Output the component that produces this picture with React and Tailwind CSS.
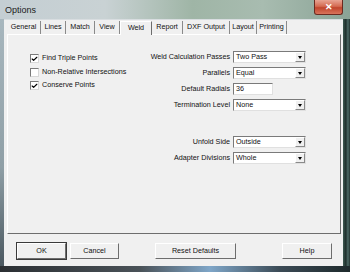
import { Check } from "lucide-react";

const font = { fontFamily: '"Liberation Sans", Arial, sans-serif' };

const CheckRow = ({ label, checked }) => (
  <div className="flex items-center h-[13.5px] gap-[3px]">
    <div className="w-[9px] h-[9px] shrink-0 bg-white border border-t-[#7a7a7a] border-l-[#7a7a7a] border-b-[#d8d8d8] border-r-[#d8d8d8] flex items-center justify-center">
      {checked && <Check size={8} strokeWidth={4} className="text-black" />}
    </div>
    <span className="text-[7.2px] text-[#111] whitespace-nowrap">{label}</span>
  </div>
);

const Field = ({ label, value, combo = true, width = "w-[73px]", className = "" }) => (
  <div className={`flex items-center h-[12px] ${className}`}>
    <span className="w-[100px] text-right pr-[3px] text-[7.2px] text-[#111] whitespace-nowrap">{label}</span>
    <div className={`${width} h-[12px] bg-white border border-t-[#7a7a7a] border-l-[#7a7a7a] border-b-[#e0e0e0] border-r-[#e0e0e0] flex items-center`}>
      <span className="flex-1 pl-[2px] text-[7.2px] text-[#111] leading-none">{value}</span>
      {combo && (
        <div className="w-[10px] h-[10px] bg-[#f0f0f0] border border-t-white border-l-white border-b-[#8a8a8a] border-r-[#8a8a8a] flex items-center justify-center">
          <div className="w-0 h-0 border-l-[2.5px] border-r-[2.5px] border-t-[3px] border-l-transparent border-r-transparent border-t-black" />
        </div>
      )}
    </div>
  </div>
);

const Button = ({ label, width, def = false }) => (
  <div className={`${width} h-[16px] flex items-center justify-center bg-[#f0f0f0] border border-t-white border-l-white border-b-[#6d6d6d] border-r-[#6d6d6d] ${def ? "outline outline-1 outline-[#3a3a3a]" : ""}`}>
    <span className="text-[7.2px] text-[#111]">{label}</span>
  </div>
);

const tabs = [
  { t: "General", w: "w-[34px]" },
  { t: "Lines", w: "w-[25px]" },
  { t: "Match", w: "w-[29px]" },
  { t: "View", w: "w-[25px]" },
  { t: "Weld", w: "w-[32px]", active: true },
  { t: "Report", w: "w-[31px]" },
  { t: "DXF Output", w: "w-[47px]" },
  { t: "Layout", w: "w-[27px]" },
  { t: "Printing", w: "w-[30px]" },
];

export default function App() {
  return (
    <div className="w-[350px] h-[272px] overflow-hidden relative bg-[linear-gradient(90deg,#aebcc2_0%,#b9c6c9_35%,#8ea596_60%,#6b8a78_85%,#2f4a40_100%)]" style={font}>
      {/* title bar */}
      <div className="h-[19px] flex items-start justify-between bg-[linear-gradient(90deg,#c4ced3_0%,#c9d2d4_30%,#9fb5a6_55%,#a8bcb0_75%,#8aa396_100%)]">
        <span className="ml-[5px] mt-[4px] text-[9px] text-[#1b1b1b]">Options</span>
        <div className="mr-[7px] w-[29px] h-[15px] rounded-b-[3px] border border-[#6b2a20] border-t-0 bg-[linear-gradient(180deg,#e8a493_0%,#d46b52_45%,#c0452c_55%,#d8745c_100%)] flex items-center justify-center">
          <span className="text-white text-[9px] font-bold leading-none">✕</span>
        </div>
      </div>

      <div className="flex">
        <div className="w-[4px] h-[247px] bg-[linear-gradient(180deg,#a8b7be_0%,#8f9fa6_60%,#4b5860_100%)]" />
        {/* client */}
        <div className="w-[339px] h-[247px] bg-[#f0f0f0] border-t border-[#d8dde0] flex flex-col">
          {/* tabs */}
          <div className="flex items-end h-[13px] ml-[3px] mt-[1px]">
            {tabs.map(({ t, w, active }) =>
              active ? (
                <div key={t} className={`${w} h-[14px] flex items-center justify-center bg-[#f0f0f0] border border-b-0 border-t-white border-l-white border-r-[#6d6d6d] relative top-[1px] z-10`}>
                  <span className="text-[7.2px] text-[#111]">{t}</span>
                </div>
              ) : (
                <div key={t} className={`${w} h-[13px] flex items-center justify-center border-r border-[#8a8a8a]`}>
                  <span className="text-[7.2px] text-[#111] whitespace-nowrap">{t}</span>
                </div>
              )
            )}
          </div>
          {/* panel */}
          <div className="ml-[3px] w-[334px] h-[200px] border border-t-white border-l-white border-b-[#6d6d6d] border-r-[#6d6d6d] flex">
            <div className="w-[125px] shrink-0 pl-[22px] pt-[17px] flex flex-col">
              <CheckRow label="Find Triple Points" checked />
              <CheckRow label="Non-Relative Intersections" />
              <CheckRow label="Conserve Points" checked />
            </div>
            <div className="pt-[16px] flex flex-col">
              <Field label="Weld Calculation Passes" value="Two Pass" />
              <Field label="Parallels" value="Equal" className="mt-[4px]" />
              <Field label="Default Radials" value="36" combo={false} width="w-[40px]" className="mt-[4px]" />
              <Field label="Termination Level" value="None" className="mt-[4px]" />
              <Field label="Unfold Side" value="Outside" className="mt-[25px]" />
              <Field label="Adapter Divisions" value="Whole" className="mt-[4px]" />
            </div>
          </div>
          {/* buttons */}
          <div className="flex items-center mt-[9px] pl-[13px]">
            <Button label="OK" width="w-[49px]" def />
            <div className="w-[4px]" />
            <Button label="Cancel" width="w-[49px]" />
            <div className="w-[36px]" />
            <Button label="Reset Defaults" width="w-[81px]" />
            <div className="w-[46px]" />
            <Button label="Help" width="w-[50px]" />
          </div>
        </div>
        <div className="w-[7px] h-[247px] bg-[linear-gradient(90deg,#3e5a52_0%,#1e2f2c_40%,#4d6a66_70%,#223330_100%)]" />
      </div>
      <div className="h-[6px] bg-[linear-gradient(90deg,#2b2f33_0%,#4a5258_40%,#7fa6c8_60%,#3b4a55_80%,#1e2a2c_100%)]" />
    </div>
  );
}
